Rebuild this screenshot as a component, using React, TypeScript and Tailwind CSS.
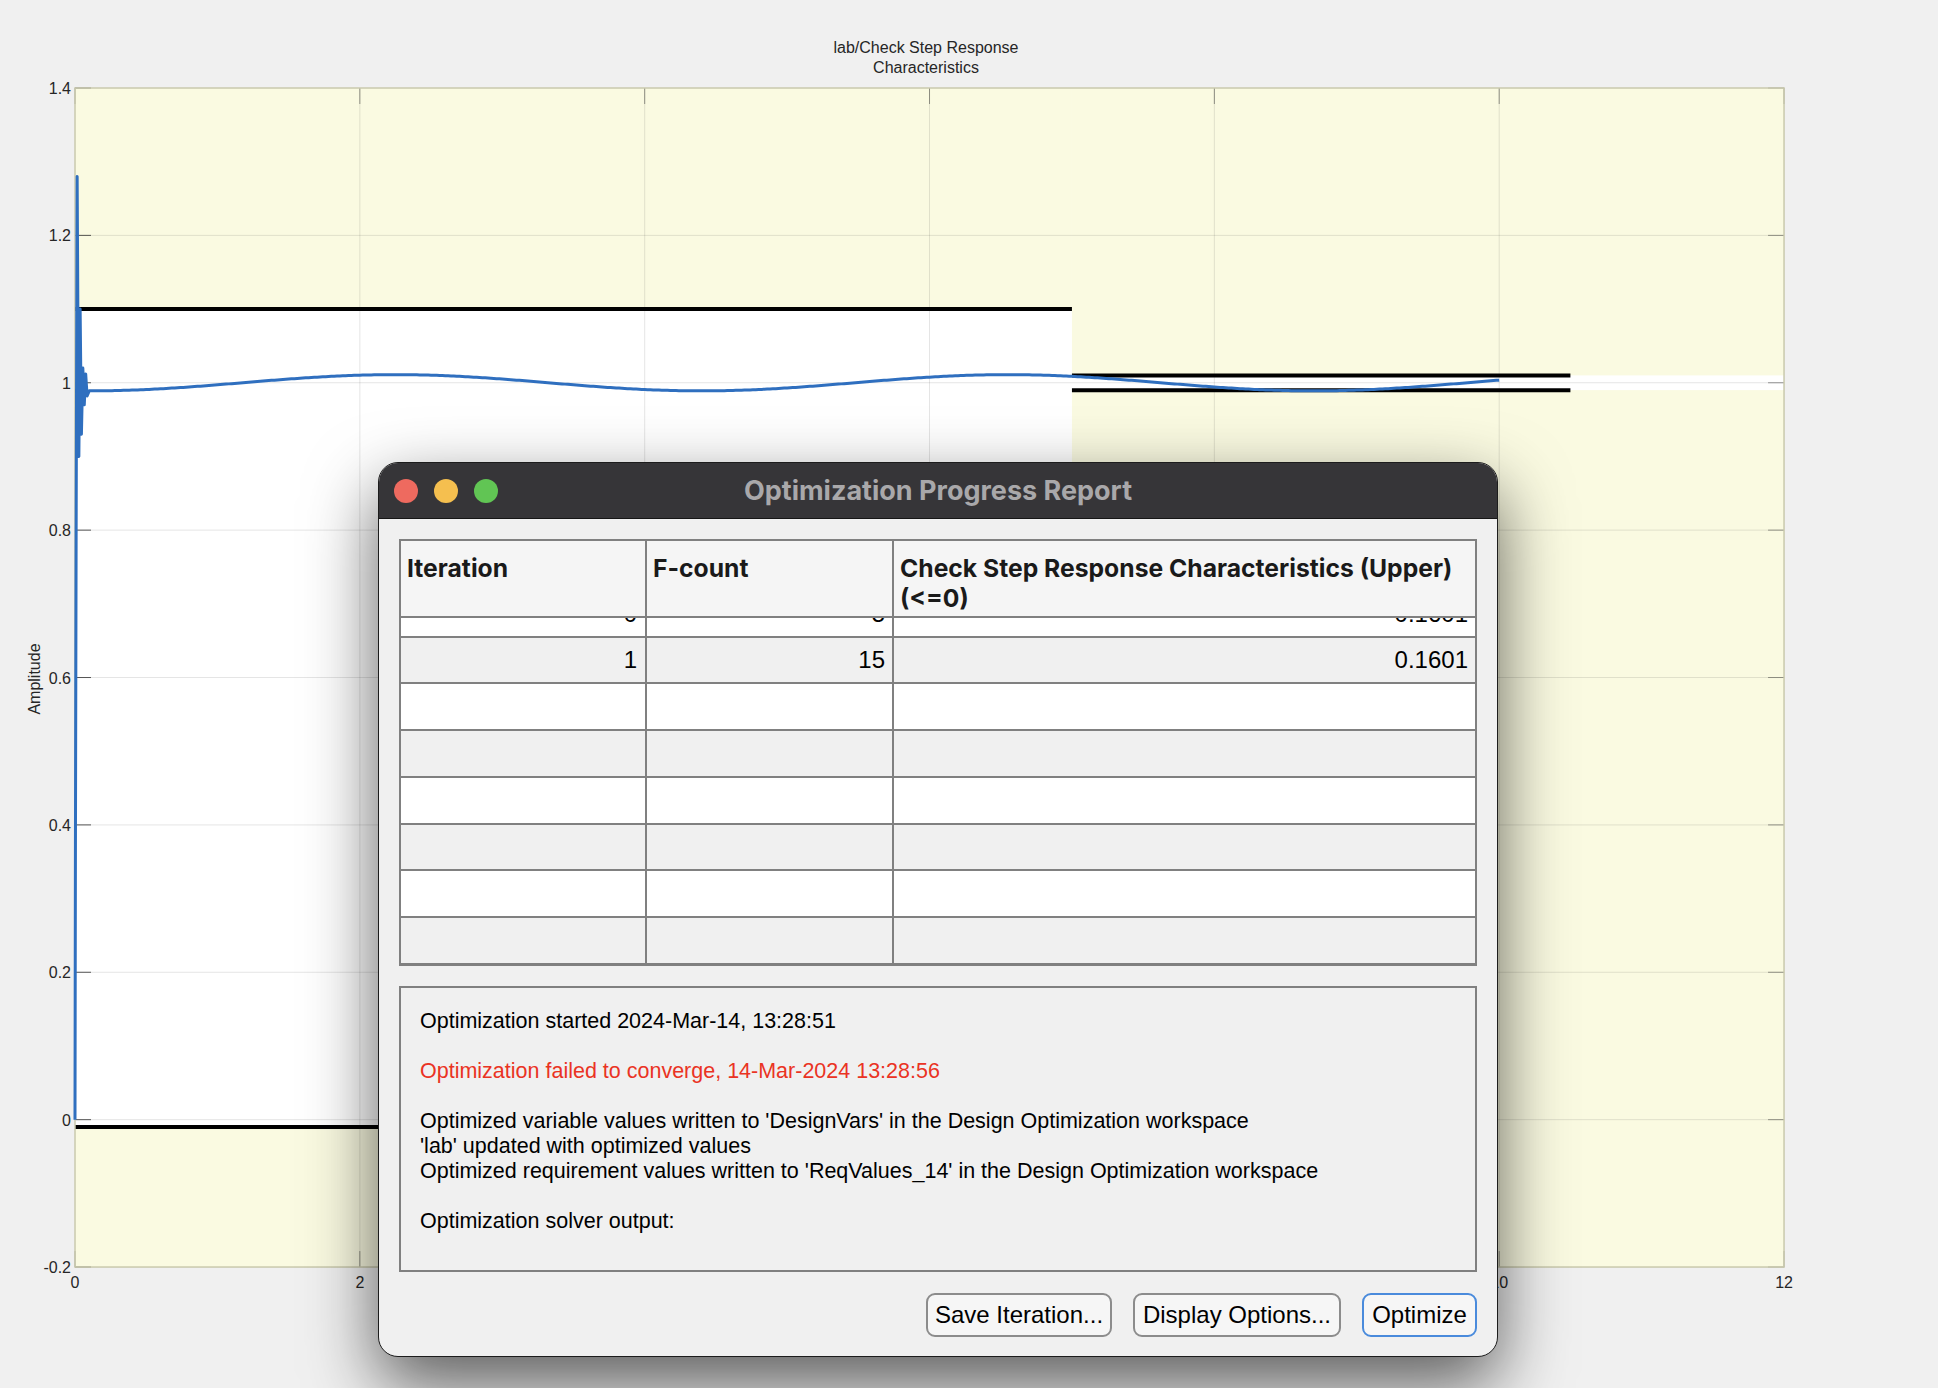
import React from "react";

const X = (t: number) => 75 + t * 142.42;
const Y = (v: number) => 88 + (1.4 - v) * 736.9;

function curvePath() {
  const pts: [number, number][] = [
    [0, 0],
    [0.003, 0.37],
    [0.008, 0.8],
    [0.015, 1.28],
    [0.02, 1.1],
    [0.027, 0.9],
    [0.036, 1.1],
    [0.045, 0.93],
    [0.055, 1.02],
    [0.065, 0.97],
    [0.075, 1.012],
    [0.085, 0.982],
  ];
  for (let t = 0.1; t <= 10.0001; t += 0.02) {
    pts.push([t, 1 - 0.011 * Math.cos((2 * Math.PI * (t - 0.1)) / 4.3)]);
  }
  return pts
    .map((p, i) => `${i === 0 ? "M" : "L"}${X(p[0]).toFixed(2)},${Y(p[1]).toFixed(2)}`)
    .join(" ");
}

const yTicks = [1.4, 1.2, 1, 0.8, 0.6, 0.4, 0.2, 0, -0.2];
const yLabels = ["1.4", "1.2", "1", "0.8", "0.6", "0.4", "0.2", "0", "-0.2"];
const xTicks = [0, 2, 4, 6, 8, 10, 12];

function Plot() {
  const yellow = "#fafae1";
  const font = "'Liberation Sans', Arial, sans-serif";
  return (
    <svg width={1938} height={1230} viewBox="0 80 1938 1230" className="block">
      <rect x={X(0)} y={Y(1.4)} width={X(12) - X(0)} height={Y(-0.2) - Y(1.4)} fill="#ffffff" />
      {/* requirement patches */}
      <rect x={X(0)} y={Y(1.4)} width={X(7) - X(0)} height={Y(1.1) - Y(1.4)} fill={yellow} />
      <rect x={X(0)} y={Y(-0.01)} width={X(7) - X(0)} height={Y(-0.2) - Y(-0.01)} fill={yellow} />
      <rect x={X(7)} y={Y(1.4)} width={X(12) - X(7)} height={Y(1.01) - Y(1.4)} fill={yellow} />
      <rect x={X(7)} y={Y(0.99)} width={X(12) - X(7)} height={Y(-0.2) - Y(0.99)} fill={yellow} />
      {/* grid */}
      {[2, 4, 6, 8, 10].map((t) => (
        <line key={"gx" + t} x1={X(t)} x2={X(t)} y1={Y(1.4)} y2={Y(-0.2)} stroke="#262626" strokeOpacity={0.12} strokeWidth={1} />
      ))}
      {[1.2, 1, 0.8, 0.6, 0.4, 0.2, 0].map((v) => (
        <line key={"gy" + v} x1={X(0)} x2={X(12)} y1={Y(v)} y2={Y(v)} stroke="#262626" strokeOpacity={0.12} strokeWidth={1} />
      ))}
      {/* ticks */}
      {yTicks.map((v) => (
        <g key={"ty" + v}>
          <line x1={X(0)} x2={X(0) + 16} y1={Y(v)} y2={Y(v)} stroke="#262626" strokeOpacity={0.75} strokeWidth={1} />
          <line x1={X(12) - 16} x2={X(12)} y1={Y(v)} y2={Y(v)} stroke="#262626" strokeOpacity={0.45} strokeWidth={1} />
        </g>
      ))}
      {xTicks.map((t) => (
        <g key={"tx" + t}>
          <line x1={X(t)} x2={X(t)} y1={Y(1.4)} y2={Y(1.4) + 16} stroke="#262626" strokeOpacity={0.45} strokeWidth={1} />
          <line x1={X(t)} x2={X(t)} y1={Y(-0.2) - 16} y2={Y(-0.2)} stroke="#262626" strokeOpacity={0.45} strokeWidth={1} />
        </g>
      ))}
      {/* bounds */}
      <line x1={X(0)} x2={X(7)} y1={Y(1.1)} y2={Y(1.1)} stroke="#000" strokeWidth={4} />
      <line x1={X(0)} x2={X(7)} y1={Y(-0.01)} y2={Y(-0.01)} stroke="#000" strokeWidth={4} />
      <line x1={X(7)} x2={X(10.5)} y1={Y(1.01)} y2={Y(1.01)} stroke="#000" strokeWidth={4} />
      <line x1={X(7)} x2={X(10.5)} y1={Y(0.99)} y2={Y(0.99)} stroke="#000" strokeWidth={4} />
      {/* axes box */}
      <rect x={X(0)} y={Y(1.4)} width={X(12) - X(0)} height={Y(-0.2) - Y(1.4)} fill="none" stroke="#c9c9ad" strokeWidth={1.5} />
      {/* response */}
      <path d={curvePath()} fill="none" stroke="#2f6fbf" strokeWidth={3} strokeLinejoin="round" />
      {/* labels */}
      {yTicks.map((v, i) => (
        <text key={"ly" + v} x={71} y={Y(v) + 6} textAnchor="end" fontFamily={font} fontSize={16} fill="#262626">
          {yLabels[i]}
        </text>
      ))}
      {xTicks.map((t) => (
        <text key={"lx" + t} x={X(t)} y={1288} textAnchor="middle" fontFamily={font} fontSize={16} fill="#262626">
          {String(t)}
        </text>
      ))}
      <text
        x={0}
        y={0}
        transform="translate(40 679) rotate(-90)"
        textAnchor="middle"
        fontFamily={font}
        fontSize={16}
        fill="#262626"
      >
        Amplitude
      </text>
    </svg>
  );
}

const rows: { it: string; fc: string; val: string; h: string; bg: string; mt?: boolean }[] = [
  { it: "0", fc: "5", val: "0.1601", h: "h-[47px]", bg: "bg-white", mt: true },
  { it: "1", fc: "15", val: "0.1601", h: "h-[46px]", bg: "bg-[#f0f0f0]" },
  { it: "", fc: "", val: "", h: "h-[47px]", bg: "bg-white" },
  { it: "", fc: "", val: "", h: "h-[47px]", bg: "bg-[#f0f0f0]" },
  { it: "", fc: "", val: "", h: "h-[47px]", bg: "bg-white" },
  { it: "", fc: "", val: "", h: "h-[46px]", bg: "bg-[#f0f0f0]" },
  { it: "", fc: "", val: "", h: "h-[47px]", bg: "bg-white" },
  { it: "", fc: "", val: "", h: "h-[47px]", bg: "bg-[#f0f0f0]" },
];

function Dialog() {
  return (
    <div className="absolute left-[378px] top-[462px] w-[1120px] rounded-[20px] border border-[#1c1c1c] bg-[#f0f0f0] overflow-hidden shadow-[0_28px_70px_rgba(0,0,0,0.62)]">
      {/* title bar */}
      <div className="h-[56px] bg-[#363538] border-b border-[#161616] grid grid-cols-[1fr_auto_1fr] items-center">
        <div className="flex items-center gap-[16px] pl-[15px]">
          <div className="w-[24px] h-[24px] rounded-full bg-[#ee6a5f]" />
          <div className="w-[24px] h-[24px] rounded-full bg-[#f5bf4f]" />
          <div className="w-[24px] h-[24px] rounded-full bg-[#61c554]" />
        </div>
        <div className="font-['Inter',sans-serif] font-bold text-[27px] text-[#a9a8aa] leading-none pb-[1px]">
          Optimization Progress Report
        </div>
        <div />
      </div>
      {/* body */}
      <div className="px-[20px] pt-[20px] pb-[19px]">
        {/* table */}
        <div className="h-[427px] border-2 border-[#808080] flex flex-col overflow-hidden">
          <div className="h-[77px] shrink-0 flex bg-[#f5f5f5] border-b-2 border-[#808080] font-['Inter',sans-serif] font-bold text-[24.7px] leading-[30px] text-[#1a1a1a]">
            <div className="w-[246px] border-r-2 border-[#808080] pl-[6px] pt-[12px]">Iteration</div>
            <div className="w-[247px] border-r-2 border-[#808080] pl-[6px] pt-[12px]">F-count</div>
            <div className="flex-1 pl-[6px] pt-[12px]">
              Check Step Response Characteristics (Upper)
              <br />
              (&lt;=0)
            </div>
          </div>
          <div className="flex-1 overflow-hidden">
            {rows.map((r, i) => (
              <div
                key={i}
                className={`${r.h} ${r.bg} ${r.mt ? "-mt-[27px]" : ""} flex border-b-2 border-[#808080] font-['Liberation_Sans',Arial,sans-serif] text-[24px] text-black`}
              >
                <div className="w-[246px] border-r-2 border-[#808080] flex items-center justify-end pr-[8px]">{r.it}</div>
                <div className="w-[247px] border-r-2 border-[#808080] flex items-center justify-end pr-[7px]">{r.fc}</div>
                <div className="flex-1 flex items-center justify-end pr-[7px]">{r.val}</div>
              </div>
            ))}
          </div>
        </div>
        {/* messages */}
        <div className="mt-[20px] h-[286px] border-2 border-[#808080] bg-[#f0f0f0] pl-[19px] pt-[21px] font-['Liberation_Sans',Arial,sans-serif] text-[21.5px] leading-[25px] text-black">
          <div>Optimization started 2024-Mar-14, 13:28:51</div>
          <div className="h-[25px]" />
          <div className="text-[#ea3323]">Optimization failed to converge, 14-Mar-2024 13:28:56</div>
          <div className="h-[25px]" />
          <div>Optimized variable values written to 'DesignVars' in the Design Optimization workspace</div>
          <div>'lab' updated with optimized values</div>
          <div>Optimized requirement values written to 'ReqValues_14' in the Design Optimization workspace</div>
          <div className="h-[25px]" />
          <div>Optimization solver output:</div>
        </div>
        {/* buttons */}
        <div className="mt-[21px] flex justify-end gap-[21px] font-['Liberation_Sans',Arial,sans-serif] text-[24px] text-black">
          <div className="w-[186px] h-[44px] rounded-[9px] border-2 border-[#8c8c8c] bg-[#f6f6f6] flex items-center justify-center">
            Save Iteration...
          </div>
          <div className="w-[208px] h-[44px] rounded-[9px] border-2 border-[#8c8c8c] bg-[#f6f6f6] flex items-center justify-center">
            Display Options...
          </div>
          <div className="w-[115px] h-[44px] rounded-[9px] border-2 border-[#4a8bdc] bg-[#f6f6f6] flex items-center justify-center">
            Optimize
          </div>
        </div>
      </div>
    </div>
  );
}

export default function App() {
  return (
    <div className="relative w-[1938px] h-[1388px] bg-[#f0f0f0] overflow-hidden">
      <div className="h-[80px] pt-[38px] ml-[75px] w-[1702px] text-center font-['Liberation_Sans',Arial,sans-serif] text-[16px] leading-[20px] text-[#262626]">
        lab/Check Step Response
        <br />
        Characteristics
      </div>
      <Plot />
      <Dialog />
    </div>
  );
}
